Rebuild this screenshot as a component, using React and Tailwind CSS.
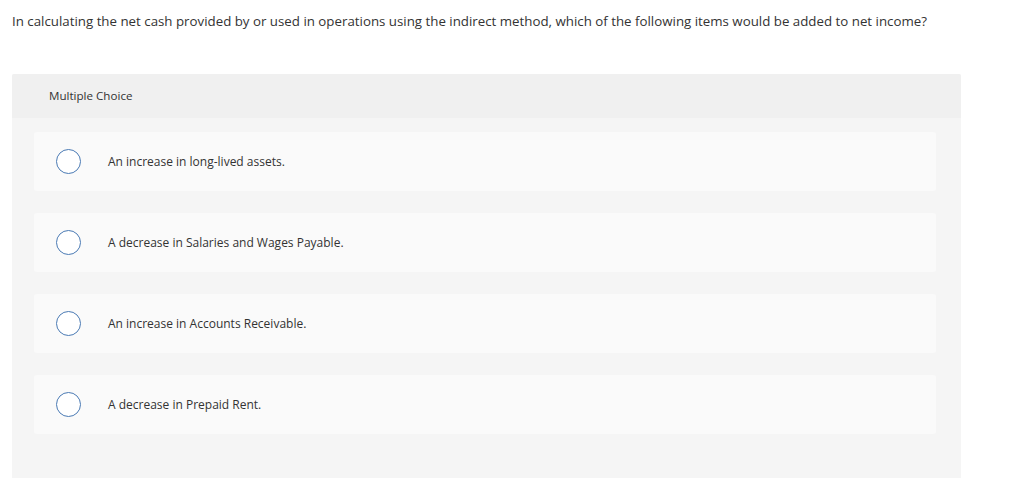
const choices = [
  'An increase in long-lived assets.',
  'A decrease in Salaries and Wages Payable.',
  'An increase in Accounts Receivable.',
  'A decrease in Prepaid Rent.',
]

export default function App() {
  return (
    <div className="min-h-[478px] bg-white text-[#333] overflow-hidden" style={{ fontFamily: '"Open Sans", "Liberation Sans", sans-serif' }}>
      <p className="px-3 pt-[12px] text-[13.3px] leading-[18px]">
        In calculating the net cash provided by or used in operations using the indirect method, which of the following items would be added to net income?
      </p>

      <div className="ml-3 mt-[44px] w-[949px] bg-[#f5f5f5] pb-[44px] rounded-t-[2px]">
        <div className="h-[44px] bg-[#f0f0f0] flex items-center pl-[37px] text-[11.6px] rounded-t-[2px]">Multiple Choice</div>
        <div className="flex flex-col gap-[22px] pt-[14px] px-[22px] pr-[25px]">
          {choices.map((c) => (
            <div key={c} className="h-[59px] bg-[#fafafa] rounded-[3px] flex items-center">
              <span className="ml-[22px] w-[25px] h-[25px] rounded-full border-[1.5px] border-[#4a7ab4] bg-white" />
              <span className="ml-[27px] text-[12px]">{c}</span>
            </div>
          ))}
        </div>
      </div>
    </div>
  )
}
